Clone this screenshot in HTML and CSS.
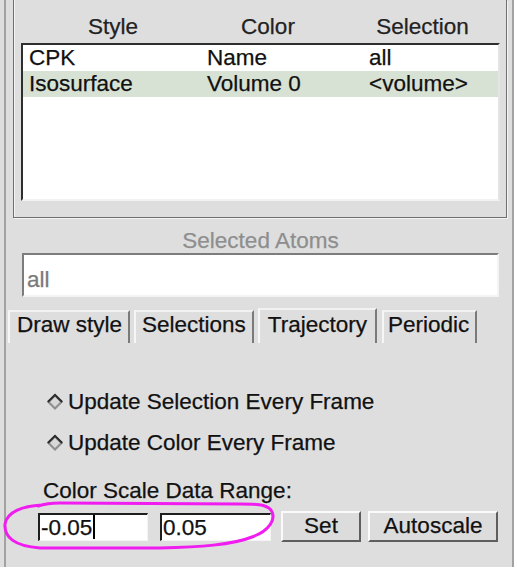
FILE: index.html
```html
<!DOCTYPE html>
<html>
<head>
<meta charset="utf-8">
<link rel="stylesheet" href="styles.css">
</head>
<body>
<div class="screen">
  <div class="panel">
    <div class="frame">
      <div class="list-head">
        <span>Style</span><span>Color</span><span class="h-sel">Selection</span>
      </div>
      <div class="listbox">
        <div class="row"><span>CPK</span><span>Name</span><span>all</span></div>
        <div class="row hl"><span>Isosurface</span><span>Volume 0</span><span>&lt;volume&gt;</span></div>
      </div>
    </div>
    <div class="sel-atoms">
      <div class="caption">Selected Atoms</div>
      <div class="entry-wide">all</div>
    </div>
    <div class="tabs">
      <div class="tab t1">Draw style</div>
      <div class="tab t2">Selections</div>
      <div class="tab t3 active">Trajectory</div>
      <div class="tab t4">Periodic</div>
    </div>
    <div class="tab-body">
      <div class="radio r1">
        <svg class="diamond" width="18" height="18" viewBox="0 0 18 18">
          <polygon points="9,1 17,9 9,17 1,9" fill="#8e8e8e"/>
          <polygon points="9,4 14,9 9,14 4,9" fill="#d8d8d8"/>
          <polyline points="1.8,9 9,1.8 16.2,9" fill="none" stroke="#2a2a2a" stroke-width="2"/>
        </svg>
        <span>Update Selection Every Frame</span>
      </div>
      <div class="radio r2">
        <svg class="diamond" width="18" height="18" viewBox="0 0 18 18">
          <polygon points="9,1 17,9 9,17 1,9" fill="#8e8e8e"/>
          <polygon points="9,4 14,9 9,14 4,9" fill="#d8d8d8"/>
          <polyline points="1.8,9 9,1.8 16.2,9" fill="none" stroke="#2a2a2a" stroke-width="2"/>
        </svg>
        <span>Update Color Every Frame</span>
      </div>
      <div class="range-label">Color Scale Data Range:</div>
      <div class="range-row">
        <div class="entry e1"><span>-0.05</span><span class="caret"></span></div>
        <div class="entry e2">0.05</div>
        <div class="btn b-set">Set</div>
        <div class="btn b-auto">Autoscale</div>
      </div>
    </div>
  </div>
  <svg class="annot" width="517" height="574" viewBox="0 0 517 574">
    <path d="M 42 505 C 22 506, 7 512, 5 524 C 4 537, 14 546, 40 548 L 160 548 C 200 547, 232 545, 252 537 C 269 531, 277 519, 271 510 C 266 504, 255 504, 240 504 L 60 503 C 50 503, 44 504, 38 506" fill="none" stroke="#f01cf0" stroke-width="3" stroke-linecap="round" stroke-linejoin="round"/>
  </svg>
</div>
</body>
</html>
```

FILE: styles.css
```css
* { box-sizing: border-box; }

html, body {
  margin: 0;
  padding: 0;
  background: #ffffff;
}

body {
  font-family: "Liberation Sans", Arial, sans-serif;
  font-size: 22.5px;
  color: #111;
  -webkit-text-stroke: 0.25px currentColor;
}

.screen {
  position: relative;
  width: 514px;
  height: 567px;
  padding-left: 4px;
  background: #dedede;
}

.panel {
  height: 567px;
  border-left: 2px solid #a2a2a2;
  border-right: 2px solid #a2a2a2;
  background: #dedede;
}

/* top frame with the list */
.frame {
  margin: 0 5px 0 7px;
  padding: 0 6px 16px 7px;
  border-left: 1px solid #6f6f6f;
  border-right: 1px solid #6f6f6f;
  border-bottom: 1px solid #6f6f6f;
  box-shadow: inset 1px 0 0 #f4f4f4, 1px 1px 0 #f4f4f4;
}

.list-head {
  display: grid;
  grid-template-columns: 184px 126px 1fr;
  height: 43px;
  padding-top: 14px;
  line-height: 25px;
  color: #222;
  text-align: center;
}

.list-head .h-sel { padding-left: 14px; }

.listbox {
  height: 158px;
  background: #fff;
  border-top: 2px solid #2e2e2e;
  border-left: 2px solid #2e2e2e;
  border-bottom: 2px solid #f2f2f2;
  border-right: 2px solid #e4e4e4;
}

.row {
  display: grid;
  grid-template-columns: 178px 162px 1fr;
  height: 26px;
  line-height: 26px;
  white-space: nowrap;
}

.row span { padding-left: 6px; }

.row.hl { background: #d8e2d4; }

/* selected atoms */
.sel-atoms {
  margin: 11px 13px 0 16px;
}

.caption {
  line-height: 24px;
  text-align: center;
  color: #8e8e8e;
}

.entry-wide {
  height: 44px;
  padding: 12px 0 0 3px;
  line-height: 25px;
  background: #fff;
  color: #7a7a7a;
  border-top: 2px solid #7c7c7c;
  border-left: 2px solid #7c7c7c;
  border-bottom: 2px solid #f4f4f4;
  border-right: 2px solid #f4f4f4;
}

/* tabs */
.tabs {
  display: flex;
  align-items: flex-end;
  margin-top: 11px;
  padding-left: 2px;
  height: 35px;
}

.tab {
  height: 33px;
  line-height: 25px;
  padding: 0 6px 6px 6px;
  border-top: 2px solid #f2f2f2;
  border-left: 2px solid #f6f6f6;
  border-right: 2px solid #7a7a7a;
  white-space: nowrap;
}

.t1 { padding-left: 7px; }
.t2 { margin-left: 4px; }
.t3 { margin-left: 4px; }
.t4 { margin-left: 5px; padding-left: 4px; }

.tab.active {
  height: 35px;
  padding: 2px 8px 6px 8px;
}

/* body of the Trajectory tab */
.tab-body {
  padding-top: 46px;
  line-height: 25px;
}

.radio {
  display: flex;
  align-items: center;
  margin-left: 40px;
  white-space: nowrap;
}

.diamond {
  flex: none;
  margin-right: 4px;
}

.r2 { margin-top: 16px; }

.range-label {
  margin: 23px 0 0 37px;
}

.range-row {
  display: flex;
  align-items: center;
  margin: 8px 0 0 32px;
  height: 31px;
}

.entry {
  display: flex;
  align-items: center;
  height: 28px;
  padding-left: 1px;
  background: #fff;
  border-top: 2px solid #1e1e1e;
  border-left: 2px solid #1e1e1e;
  border-bottom: 1px solid #f4f4f4;
  border-right: 1px solid #f4f4f4;
  line-height: 25px;
}

.e1 { width: 110px; }
.e2 { width: 111px; margin-left: 12px; }

.caret {
  width: 2px;
  height: 24px;
  margin-left: 1px;
  background: #000;
}

.btn {
  height: 31px;
  line-height: 25px;
  text-align: center;
  background: #dcdcdc;
  border-top: 2px solid #fafafa;
  border-left: 2px solid #fafafa;
  border-bottom: 2px solid #5e5e5e;
  border-right: 2px solid #5e5e5e;
}

.b-set { width: 80px; margin-left: 10px; }
.b-auto { width: 130px; margin-left: 7px; }

.annot {
  position: absolute;
  left: 0;
  top: 0;
  pointer-events: none;
}
```
